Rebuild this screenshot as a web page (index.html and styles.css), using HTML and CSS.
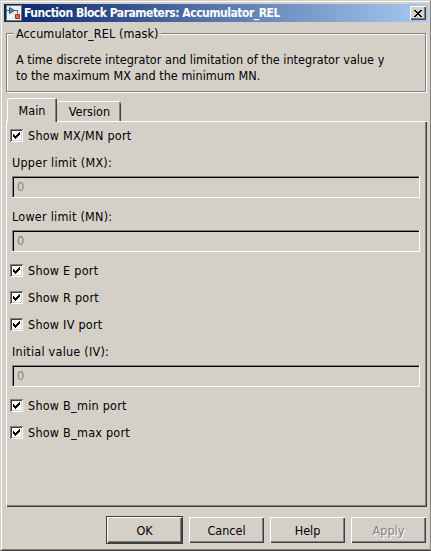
FILE: index.html
```
<!DOCTYPE html>
<html lang="en">
<head>
<meta charset="utf-8">
<title>Function Block Parameters: Accumulator_REL</title>
<link rel="stylesheet" href="styles.css">
</head>
<body>
<main class="window">
  <header class="titlebar">
    <svg class="app-icon" width="16" height="16" viewBox="0 0 16 16"><rect width="16" height="16" fill="#777"/><path d="M1 1h14v14H1z" fill="#f1eee9"/><path d="M1 5.500h2M8 5.500h3.500v3" stroke="#456" fill="none"/><path d="M3.500 2.500v6l5-3z" fill="#3f91bd" stroke="#235b83"/><path d="M9.500 9.500h4v4h-4z" fill="#ed6840" stroke="#a92e13"/></svg>
    <h1 class="title">Function Block Parameters: Accumulator_REL</h1>
    <button class="close" aria-label="Close"><svg width="8" height="7" viewBox="0 0 8 7" shape-rendering="crispEdges"><path d="M0 0h2v1h1v1h2V1h1V0h2v1H7v1H6v1H5v1h1v1h1v1h1v1H6V6H5V5H3v1H2v1H0V6h1V5h1V4h1V3H2V2H1V1H0z"/></svg></button>
  </header>
  <fieldset class="group">
    <legend>Accumulator_REL (mask)</legend>
    <p>A time discrete integrator and limitation of the integrator value y<br>to the maximum MX and the minimum MN.</p>
  </fieldset>
  <nav class="tabs">
    <button class="tab active">Main</button>
    <button class="tab version">Version</button>
  </nav>
  <section class="panel">
    <div class="row check"><i class="box"><svg width="7" height="7" viewBox="0 0 7 7" shape-rendering="crispEdges"><path d="M0 2h1v1h1v1h1V3h1V2h1V1h1V0h1v3H6v1H5v1H4v1H3v1H2V6H1V5H0z"/></svg></i><span>Show MX/MN port</span></div>
    <div class="row label"><span>Upper limit (MX):</span></div>
    <div class="row input"><div class="field">0</div></div>
    <div class="row label"><span>Lower limit (MN):</span></div>
    <div class="row input"><div class="field">0</div></div>
    <div class="row check"><i class="box"><svg width="7" height="7" viewBox="0 0 7 7" shape-rendering="crispEdges"><path d="M0 2h1v1h1v1h1V3h1V2h1V1h1V0h1v3H6v1H5v1H4v1H3v1H2V6H1V5H0z"/></svg></i><span>Show E port</span></div>
    <div class="row check"><i class="box"><svg width="7" height="7" viewBox="0 0 7 7" shape-rendering="crispEdges"><path d="M0 2h1v1h1v1h1V3h1V2h1V1h1V0h1v3H6v1H5v1H4v1H3v1H2V6H1V5H0z"/></svg></i><span>Show R port</span></div>
    <div class="row check"><i class="box"><svg width="7" height="7" viewBox="0 0 7 7" shape-rendering="crispEdges"><path d="M0 2h1v1h1v1h1V3h1V2h1V1h1V0h1v3H6v1H5v1H4v1H3v1H2V6H1V5H0z"/></svg></i><span>Show IV port</span></div>
    <div class="row label"><span>Initial value (IV):</span></div>
    <div class="row input"><div class="field">0</div></div>
    <div class="row check"><i class="box"><svg width="7" height="7" viewBox="0 0 7 7" shape-rendering="crispEdges"><path d="M0 2h1v1h1v1h1V3h1V2h1V1h1V0h1v3H6v1H5v1H4v1H3v1H2V6H1V5H0z"/></svg></i><span>Show B_min port</span></div>
    <div class="row check"><i class="box"><svg width="7" height="7" viewBox="0 0 7 7" shape-rendering="crispEdges"><path d="M0 2h1v1h1v1h1V3h1V2h1V1h1V0h1v3H6v1H5v1H4v1H3v1H2V6H1V5H0z"/></svg></i><span>Show B_max port</span></div>
  </section>
  <footer class="actions">
    <div class="default"><button class="btn">OK</button></div>
    <button class="btn">Cancel</button>
    <button class="btn">Help</button>
    <button class="btn disabled">Apply</button>
  </footer>
</main>
</body>
</html>
```
FILE: styles.css
```
* { box-sizing: border-box; }
body { margin: 0; }
.window {
  width: 431px; height: 551px; padding: 2px 2px 0; overflow: hidden;
  background: #d4d0c8;
  border: 1px solid;
  border-color: #d4d0c8 #808080 #404040 #d4d0c8;
  box-shadow: inset 1px 1px #fff, inset 0 -1px #808080;
  display: flex; flex-direction: column;
  font: 12.5px/16px "DejaVu Sans Condensed", "DejaVu Sans", sans-serif;
  font-stretch: condensed;
  color: #000; white-space: nowrap;
}
button { font: inherit; font-stretch: condensed; color: inherit; padding: 0; margin: 0; border: 0; background: #d4d0c8; border-radius: 0; }
.titlebar {
  height: 18px; flex: none; margin: 1px 0 0 1px; padding: 0 2px;
  display: flex; align-items: center;
  background: linear-gradient(90deg, #0a246a, #a6caf0);
}
.app-icon { flex: none; }
.title { margin: 0 auto 0 2px; font-size: 12px; line-height: 16px; font-weight: 700; color: #fff; letter-spacing: -0.48px; }
.close {
  width: 16px; height: 14px; display: flex; align-items: center; justify-content: center;
  box-shadow: inset 1px 1px #fff, inset -1px -1px #404040, inset -2px -2px #808080;
}
.group {
  height: 66px; flex: none; margin: 4px 2px 1px 3px; padding: 0 9px; min-width: 0;
  border: 1px solid #808080;
  box-shadow: 1px 1px #fff, inset 1px 1px #fff;
}
.group legend { margin-left: -2px; padding: 0 2px; height: 15px; line-height: 15px; letter-spacing: 0.1px; background: #d4d0c8; }
.group p { margin: 11px 0 0; letter-spacing: 0.02px; }
.tabs { display: flex; align-items: flex-end; height: 23px; margin: 5px 0 0 4px; flex: none; }
.tab {
  border: 0; border-top-left-radius: 2px; border-top-right-radius: 2px;
  box-shadow: inset 0 1px #fff, inset -1px 0 #404040, inset -2px 0 #808080;
}
.tab.active {
  width: 50px; height: 24px; margin-bottom: -1px; padding-top: 2px;
  position: relative; z-index: 1;
  box-shadow: inset 1px 1px #fff, inset -1px 0 #404040, inset -2px 0 #808080;
}
.tab.version { width: 64px; height: 20px; padding: 2px 0 0 1px; }
.panel {
  width: 421px; height: 386px; flex: none; margin-left: 3px; padding: 1px 7px 0 4px;
  box-shadow: inset 1px 1px #fff, inset -1px -1px #404040, inset -2px -2px #808080;
}
.row { height: 27px; display: flex; align-items: center; letter-spacing: 0.24px; }
.check { gap: 5px; }
.box {
  width: 13px; height: 13px; flex: none; display: flex; align-items: center; justify-content: center;
  background: #fff;
  box-shadow: inset 1px 1px #808080, inset -1px -1px #fff, inset 2px 2px #404040, inset -2px -2px #d4d0c8;
}
.label { padding-left: 2px; }
.input { align-items: flex-start; }
.field {
  width: 408px; height: 22px; margin-left: 2px; padding: 3px 0 0 5px; color: #808080;
  box-shadow: inset -1px -1px #fff, inset 1px 1px #808080, inset 2px 2px #000;
}
.actions { display: flex; justify-content: flex-end; align-items: center; gap: 6px; margin: 9px 0 0; padding-right: 2px; height: 28px; flex: none; }
.default { border: 1px solid #404040; }
.btn { width: 75px; height: 26px; padding-top: 2px; display: block; box-shadow: inset 1px 1px #fff, inset -1px -1px #404040, inset -2px -2px #808080; }
.disabled { color: #808080; text-shadow: 1px 1px #fff; }
```
